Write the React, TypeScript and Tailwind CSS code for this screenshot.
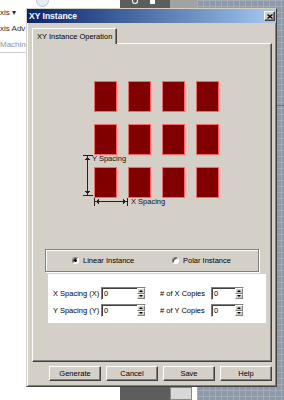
import type { ReactNode } from "react";

const face = "font-['Liberation_Sans',Arial,sans-serif]";
const raised =
  "border border-t-white border-l-white border-r-[#404040] border-b-[#404040] shadow-[inset_-1px_-1px_0_#808080]";
const sunken =
  "border border-t-[#808080] border-l-[#808080] border-r-white border-b-white shadow-[inset_1px_1px_0_#404040]";

/** What shows around the dialog: a ribbon on the left, a drawing canvas on the right. */
function Backdrop() {
  return (
    <>
      <div className="absolute left-0 top-[5px] flex flex-col text-[8px] leading-[16px] text-[#2b2b2b]">
        <span>xis ▾</span>
        <span>xis Adv</span>
        <span className="text-[#8a94a2]">Machini</span>
      </div>
      <div className="absolute left-0 top-[52px] h-px w-[26px] bg-[#c9ced6]" />
      <div className="absolute left-[36px] top-[-6px] h-[13px] w-[13px] rounded-full border border-[#b8c4d4] bg-[#e6ecf4]" />
      <div className="absolute bottom-0 left-[120px] top-0 w-[50px] bg-[#5d5d5d]" />
      <div className="absolute left-[132px] top-0 h-[4px] w-[6px] rounded-b-full border border-t-0 border-white" />
      <div className="absolute left-[150px] top-0 h-[4px] w-[5px] bg-white" />
      <div className="absolute left-[170px] top-0 h-[8px] w-[27px] bg-[#a2a2a2]" />
      <div className="absolute bottom-0 left-[170px] h-[13px] w-[22px] border border-[#8a8a8a] bg-[#d8d8d8]" />
      <div className="absolute bottom-0 left-[197px] right-0 top-0 bg-[#8f99a8] bg-[linear-gradient(#a3acb9_1px,transparent_1px),linear-gradient(90deg,#a3acb9_1px,transparent_1px)] bg-[size:6px_6px]" />
      <div className="absolute left-[277px] right-0 top-[105px] h-px bg-[#c0505a]" />
    </>
  );
}

function CloseBox() {
  return (
    <div className={`flex h-[10px] w-[11px] items-center justify-center bg-[#d4d0c8] ${raised}`}>
      <svg width="6" height="5" viewBox="0 0 6 5">
        <path d="M0.5 0.5 L5.5 4.5 M5.5 0.5 L0.5 4.5" stroke="#000" strokeWidth="1.3" />
      </svg>
    </div>
  );
}

function DimensionMarks() {
  return (
    <>
      <svg
        className="absolute left-0 top-0 overflow-visible"
        width="125"
        height="125"
        shapeRendering="crispEdges"
      >
        <g stroke="#222" strokeWidth="1">
          <line x1="-6.5" y1="74" x2="-6.5" y2="115" />
          <line x1="-11" y1="74.5" x2="-1" y2="74.5" />
          <line x1="-11" y1="114.5" x2="-1" y2="114.5" />
          <line x1="0" y1="120.5" x2="33" y2="120.5" />
          <line x1="0.5" y1="117" x2="0.5" y2="125" />
          <line x1="33.5" y1="117" x2="33.5" y2="125" />
        </g>
        <g fill="#222">
          <polygon points="-6.5,75 -9,79 -4,79" />
          <polygon points="-6.5,114 -9,110 -4,110" />
          <polygon points="1,120.5 5,118 5,123" />
          <polygon points="33,120.5 29,118 29,123" />
        </g>
      </svg>
      <span className="absolute left-[-2px] top-[74px] text-[7.5px] leading-none text-[#111]">
        Y Spacing
      </span>
      <span className="absolute left-[37px] top-[117px] text-[7.5px] leading-none text-[#111]">
        X Spacing
      </span>
    </>
  );
}

function Radio({ on, label }: { on?: boolean; label: string }) {
  return (
    <div className="flex items-center gap-[4px]">
      <span
        className={`flex h-[7px] w-[7px] items-center justify-center rounded-full bg-white ${sunken}`}
      >
        {on && <span className="h-[3px] w-[3px] rounded-full bg-black" />}
      </span>
      <span>{label}</span>
    </div>
  );
}

function Arrow({ up }: { up?: boolean }) {
  return (
    <div className="flex flex-1 items-center justify-center border border-t-white border-l-white border-r-[#808080] border-b-[#808080] bg-[#d4d0c8]">
      <span
        className={
          up
            ? "h-0 w-0 border-x-[2px] border-b-[2px] border-x-transparent border-b-black"
            : "h-0 w-0 border-x-[2px] border-t-[2px] border-x-transparent border-t-black"
        }
      />
    </div>
  );
}

function SpinBox({ width }: { width: string }) {
  return (
    <div className={`flex h-[13px] ${width} items-stretch bg-white ${sunken}`}>
      <span className="flex-1 pl-[2px] text-[7.5px] leading-[11px]">0</span>
      <div className="flex w-[8px] flex-col">
        <Arrow up />
        <Arrow />
      </div>
    </div>
  );
}

function Field({ label, children }: { label: string; children: ReactNode }) {
  return (
    <>
      <span className="w-[48px] whitespace-nowrap">{label}</span>
      {children}
    </>
  );
}

function Btn({ children }: { children: ReactNode }) {
  return (
    <div
      className={`flex h-[15px] w-[52px] items-center justify-center bg-[#d4d0c8] text-[7.5px] ${raised}`}
    >
      {children}
    </div>
  );
}

function Dialog() {
  return (
    <div className="absolute left-[26px] top-[8px] flex h-[379px] w-[251px] flex-col border border-t-[#d4d0c8] border-l-[#d4d0c8] border-r-[#404040] border-b-[#404040] bg-[#d4d0c8] text-black shadow-[inset_1px_1px_0_white,inset_-1px_-1px_0_#808080]">
      <div className="flex h-[14px] shrink-0 items-center justify-between bg-linear-to-r from-[#0a246a] to-[#a6caf0] pl-[2px] pr-[1px]">
        <span className="text-[8.5px] font-bold leading-none text-white">XY Instance</span>
        <CloseBox />
      </div>

      <div className="flex flex-col pl-[5px] pr-[4px] pt-[5px]">
        <div className="relative z-10 -mb-px flex h-[16px] w-[85px] items-center border-l border-r border-t border-l-white border-r-[#404040] border-t-white bg-[#d4d0c8] pl-[4px] text-[7.5px] shadow-[inset_-1px_0_0_#808080]">
          XY Instance Operation
        </div>

        <div className={`flex h-[319px] flex-col text-[7.5px] ${raised}`}>
          <div className="relative ml-[61px] mt-[37px] grid w-[125px] grid-cols-4 gap-x-[11px] gap-y-[12px]">
            {Array.from({ length: 12 }).map((_, i) => (
              <div key={i} className="h-[31px] border border-[#ff6464] bg-[#800000]" />
            ))}
            <DimensionMarks />
          </div>

          <div className="ml-[12px] mt-[51px] flex h-[23px] w-[214px] items-center border border-[#808080] pl-[26px] shadow-[inset_1px_1px_0_white,1px_1px_0_white]">
            <div className="w-[100px]">
              <Radio on label="Linear Instance" />
            </div>
            <Radio label="Polar Instance" />
          </div>

          <div className="ml-[15px] mt-[2px] flex h-[49px] w-[218px] flex-col gap-[4px] bg-white pl-[5px] pt-[13px]">
            <div className="flex items-center">
              <Field label="X Spacing (X)">
                <SpinBox width="w-[45px]" />
              </Field>
              <span className="ml-[14px] w-[51px] whitespace-nowrap">&#35; of X Copies</span>
              <SpinBox width="w-[33px]" />
            </div>
            <div className="flex items-center">
              <Field label="Y Spacing (Y)">
                <SpinBox width="w-[45px]" />
              </Field>
              <span className="ml-[14px] w-[51px] whitespace-nowrap">&#35; of Y Copies</span>
              <SpinBox width="w-[33px]" />
            </div>
          </div>
        </div>

        <div className="mt-[4px] flex justify-end gap-[5px]">
          <Btn>Generate</Btn>
          <Btn>Cancel</Btn>
          <Btn>Save</Btn>
          <Btn>Help</Btn>
        </div>
      </div>
    </div>
  );
}

export default function App() {
  return (
    <div className={`relative h-[400px] w-[284px] overflow-hidden bg-white ${face}`}>
      <Backdrop />
      <Dialog />
    </div>
  );
}
